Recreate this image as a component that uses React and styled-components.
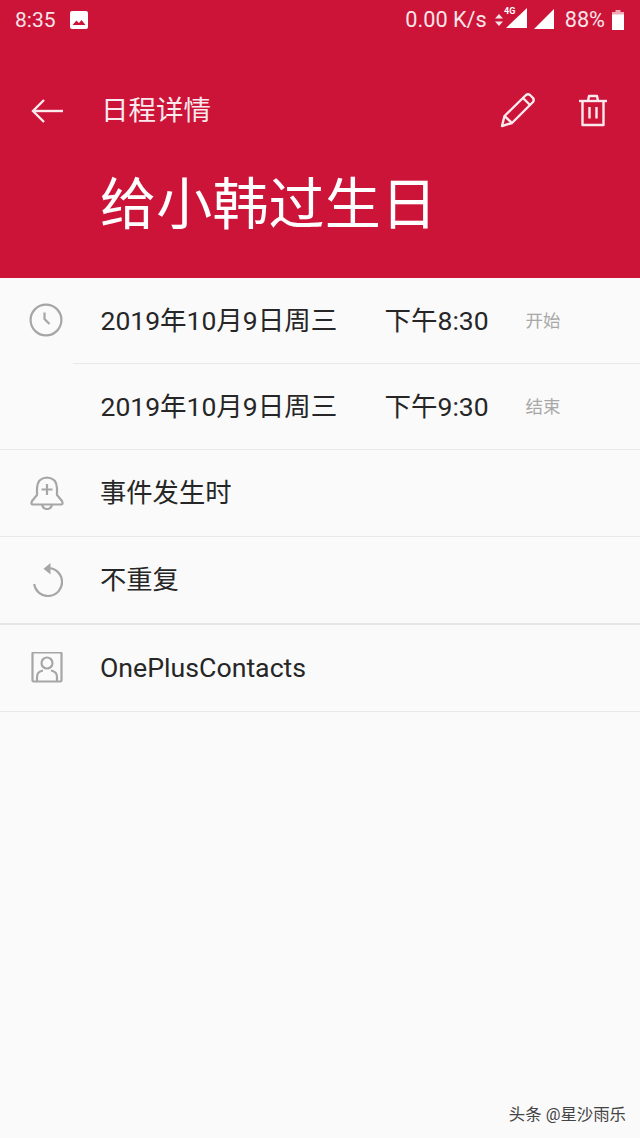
import React from "react";
import styled, { createGlobalStyle } from "styled-components";

const Global = createGlobalStyle`
  html, body { margin: 0; padding: 0; background: #fafafa; }
  body { font-family: Roboto, "Noto Sans CJK SC", sans-serif; }
`;

const Page = styled.div`
  position: relative;
  width: 640px;
  height: 1138px;
  background: #fafafa;
  overflow: hidden;
`;

const Header = styled.header`
  height: 278px;
  box-sizing: border-box;
  background: #cb1438;
  color: #fff;
  display: flex;
  flex-direction: column;
`;

const StatusBar = styled.div`
  height: 39px;
  display: flex;
  align-items: center;
  padding: 0 16px 0 15px;
  font-size: 21px;
  color: #f8e4e8;
`;

const StatusLeft = styled.div`
  display: flex;
  align-items: center;
  gap: 14px;
  flex: 1;
`;

const StatusRight = styled.div`
  display: flex;
  align-items: center;
`;

const Toolbar = styled.div`
  height: 64px;
  margin-top: 39px;
  display: flex;
  align-items: center;
  padding-left: 30px;
`;

const ToolbarTitle = styled.div`
  margin: 2px 0 0 37px;
  font-size: 27.5px;
  line-height: 36px;
  flex: 1;
  color: #fbeaed;
`;

const ToolbarActions = styled.div`
  display: flex;
  align-items: center;
  gap: 43px;
  padding-right: 33px;
`;

const EventTitle = styled.h1`
  margin: 28px 0 0;
  padding-left: 100px;
  font-size: 56px;
  line-height: 70px;
  font-weight: 400;
  letter-spacing: 0.2px;
`;

const List = styled.div`
  display: flex;
  flex-direction: column;
`;

const Row = styled.div`
  height: 86px;
  display: flex;
  align-items: center;
  border-bottom: ${(p) => (p.$thick ? "2px solid #e6e6e6" : "1px solid #e8e8e8")};
`;

const IconSlot = styled.div`
  width: 100px;
  flex: none;
  display: flex;
  justify-content: center;
  padding-right: 7px;
  box-sizing: border-box;
`;

const RowBody = styled.div`
  flex: 1;
  font-size: ${(p) => (p.$latin ? 26.7 : 26.3)}px;
  line-height: 36px;
  color: #262626;
`;

const TimeBlock = styled.div`
  display: flex;
  flex-direction: column;
`;

const TimeRow = styled.div`
  position: relative;
  height: 85px;
  display: flex;
  align-items: center;
  font-size: 26.5px;
  line-height: 36px;
  color: #262626;
  border-bottom: ${(p) => (p.$last ? "1px solid #e8e8e8" : "none")};
`;

const DivLine = styled.div`
  height: 1px;
  margin-left: 73px;
  background: #e8e8e8;
`;

const DateText = styled.span`
  width: 284px;
  flex: none;
  margin-left: 100.5px;
`;

const TimeText = styled.span`
  width: 141px;
  flex: none;
`;

const Tag = styled.span`
  font-size: 17.5px;
  color: #a8a8a8;
`;

const ClockSlot = styled.div`
  position: absolute;
  left: 29px;
  top: 25px;
  display: flex;
`;

const Watermark = styled.div`
  position: absolute;
  right: 14px;
  bottom: 13px;
  font-size: 16.4px;
  color: #444;
`;

const NetSpeed = styled.span`
  margin-right: 7px;
  font-size: 21.7px;
`;

const Percent = styled.span`
  font-size: 21.7px;
`;

const Battery = styled.span`
  margin-left: 7px;
  display: flex;
`;

const Signal4GSvg = styled.svg`
  margin-right: 4px;
  margin-bottom: 9px;
`;

const SignalSvg = styled.svg`
  margin: 0 10px 2px 0;
`;

const ArrowSvg = styled.svg`
  margin-top: 1px;
`;

const Gallery = () => (
  <svg width="18" height="18" viewBox="0 0 18 18">
    <rect width="18" height="18" rx="2" fill="#fff" />
    <path d="M2.5 14 L6.5 9.5 L9 12 L11.5 9 L15.5 14 Z" fill="#cb1438" />
  </svg>
);

const Updown = () => (
  <svg width="10" height="14" viewBox="0 0 10 14" fill="#f8e4e8">
    <path d="M5 1 L9 5.5 H1 Z M5 13 L1 8.5 H9 Z" />
  </svg>
);

const Signal4G = () => (
  <Signal4GSvg width="25" height="30" viewBox="8 0 25 30">
    <path d="M31 8 V28 H10 Z" fill="#fff" />
    <text x="8" y="14" fontSize="9" fontWeight="700" fontFamily="Roboto, sans-serif" fill="#fff">4G</text>
  </Signal4GSvg>
);

const Signal = () => (
  <SignalSvg width="22" height="22" viewBox="0 0 22 22">
    <path d="M21 1 V21 H1 Z" fill="#fff" />
  </SignalSvg>
);

const BatteryIcon = () => (
  <svg width="12" height="20" viewBox="0 0 12 20">
    <rect x="3.5" y="0" width="5" height="3" fill="#f0a8b6" />
    <rect x="0" y="2" width="12" height="3" fill="#f0a8b6" />
    <rect x="0" y="4.5" width="12" height="15.5" fill="#fff" />
  </svg>
);

const BackArrow = () => (
  <ArrowSvg width="34" height="26" viewBox="0 0 34 26" fill="none" stroke="#fbeaed" strokeWidth="2.4">
    <path d="M33 13 H3" />
    <path d="M14 2 L3 13 L14 24" />
  </ArrowSvg>
);

const Pencil = () => (
  <svg width="36" height="36" viewBox="0 0 36 36" fill="none" stroke="#fbeaed" strokeWidth="2.4" strokeLinejoin="round">
    <path d="M2 34 L4.5 24 L26 3 Q28 1.5 30 3 L33 6 Q34.5 8 33 10 L12 31 Z" />
    <path d="M23 6 L30.5 13.5" />
    <path d="M4.5 24 L12 31" />
  </svg>
);

const Trash = () => (
  <svg width="28" height="33" viewBox="0 0 28 33" fill="none" stroke="#fbeaed" strokeWidth="2.4" strokeLinejoin="round">
    <path d="M0 7 H28" />
    <path d="M9 7 L10 2 H18 L19 7" />
    <path d="M3.5 7 V31 H24.5 V7" />
    <path d="M10.5 13 V24.5 M17.5 13 V24.5" />
  </svg>
);

const Clock = () => (
  <svg width="34" height="34" viewBox="0 0 34 34" fill="none" stroke="#a6a6a6" strokeWidth="2.2">
    <circle cx="17" cy="17" r="15.4" />
    <path d="M15.5 9.5 V16 L20.5 21" />
  </svg>
);

const Bell = () => (
  <svg width="34" height="34" viewBox="0 0 34 34" fill="none" stroke="#a6a6a6" strokeWidth="2.2" strokeLinejoin="round">
    <path d="M7 19 V12 Q7.5 2 17 1.5 Q26.5 2 27 12 V19 L32 25 Q33.5 28.5 31 28.5 H3 Q.5 28.5 2 25 Z" />
    <path d="M12 28.5 Q13 33 17 33 Q21 33 22 28.5" />
    <path d="M11.5 13.5 H22.5 M17 8 V19" />
  </svg>
);

const Repeat = () => (
  <svg width="32" height="34" viewBox="0 0 32 34" fill="none" stroke="#a6a6a6" strokeWidth="2.2">
    <path d="M17 5 A14 14 0 1 1 3.2 21" />
    <path d="M19.5 0 V11.5 L12.5 5.75 Z" fill="#a6a6a6" stroke="none" />
  </svg>
);

const Contact = () => (
  <svg width="32" height="32" viewBox="0 1 32 32" fill="none" stroke="#a6a6a6" strokeWidth="2.2">
    <rect x="1.5" y="1.5" width="29" height="29" rx="1" />
    <circle cx="16" cy="12" r="5.5" />
    <path d="M6 30 V26 Q6 20.5 12 19.5 M26 30 V26 Q26 20.5 20 19.5" />
  </svg>
);

export default function App() {
  return (
    <Page>
      <Global />
      <Header>
        <StatusBar>
          <StatusLeft>
            <span>8:35</span>
            <Gallery />
          </StatusLeft>
          <StatusRight>
            <NetSpeed>0.00 K/s</NetSpeed>
            <Updown />
            <Signal4G />
            <Signal />
            <Percent>88%</Percent>
            <Battery><BatteryIcon /></Battery>
          </StatusRight>
        </StatusBar>
        <Toolbar>
          <BackArrow />
          <ToolbarTitle>日程详情</ToolbarTitle>
          <ToolbarActions>
            <Pencil />
            <Trash />
          </ToolbarActions>
        </Toolbar>
        <EventTitle>给小韩过生日</EventTitle>
      </Header>
      <List>
        <TimeBlock>
          <TimeRow>
            <ClockSlot><Clock /></ClockSlot>
            <DateText>2019年10月9日周三</DateText>
            <TimeText>下午8:30</TimeText>
            <Tag>开始</Tag>
          </TimeRow>
          <DivLine />
          <TimeRow $last>
            <DateText>2019年10月9日周三</DateText>
            <TimeText>下午9:30</TimeText>
            <Tag>结束</Tag>
          </TimeRow>
        </TimeBlock>
        <Row>
          <IconSlot><Bell /></IconSlot>
          <RowBody>事件发生时</RowBody>
        </Row>
        <Row $thick>
          <IconSlot><Repeat /></IconSlot>
          <RowBody>不重复</RowBody>
        </Row>
        <Row>
          <IconSlot><Contact /></IconSlot>
          <RowBody $latin>OnePlusContacts</RowBody>
        </Row>
      </List>
      <Watermark>头条 @星沙雨乐</Watermark>
    </Page>
  );
}
